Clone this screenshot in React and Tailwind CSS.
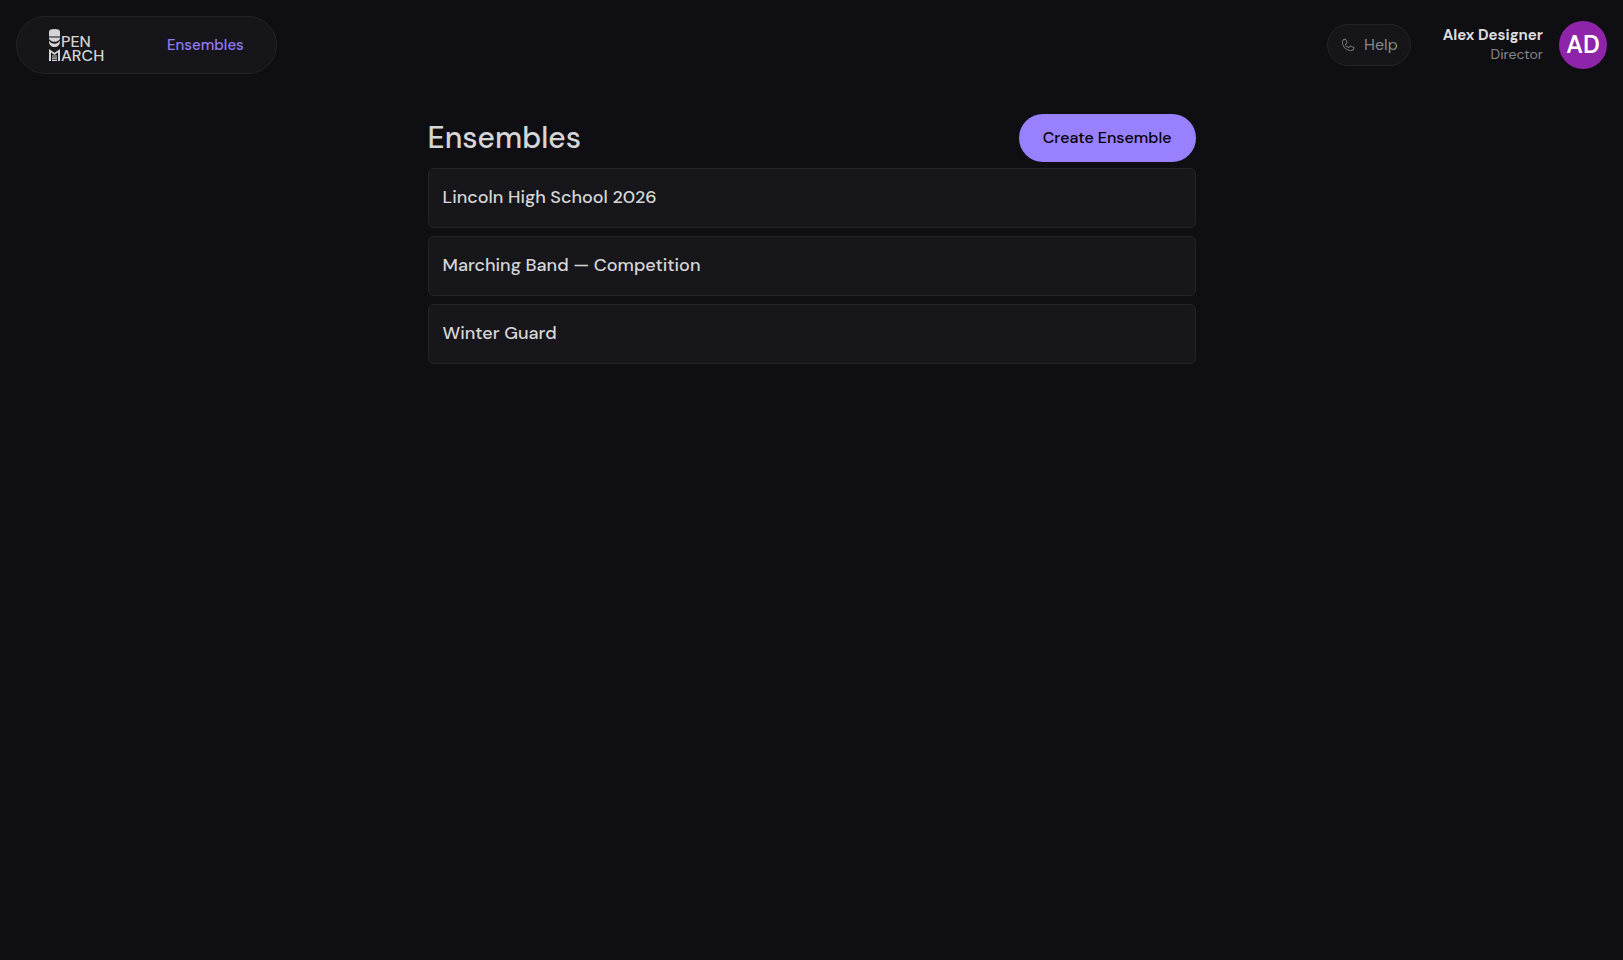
import React from 'react';
import { PiPhoneLight } from 'react-icons/pi';

const ensembles = [
  { id: 1, name: 'Lincoln High School 2026' },
  { id: 2, name: 'Marching Band — Competition' },
  { id: 3, name: 'Winter Guard' },
];

const Logo = () => (
  <svg
    width="54"
    height="34"
    viewBox="0 0 54 34"
    fill="#d4d4d6"
    role="img"
    aria-label="OpenMarch"
    className="overflow-visible"
  >
    {/* Shako, visor and chin strap */}
    <path d="M0 3.6C0 1.8 2.4 1 5.5 1S11 1.8 11 3.6V8.6H0Z" />
    <path d="M0 9.4H11V11C9.4 13 7.6 13.8 5.5 13.8S1.6 13 0 11Z" />
    <path d="M0 12.6C1.4 14.8 3.4 15.8 5.5 15.8S9.6 14.8 11 12.6V13.4C11 16.8 8.6 19 5.5 19S0 16.8 0 13.4Z" />
    {/* Uniform jacket */}
    <path d="M0 21L5.5 24.8L11 21V33H9V24.6L5.5 27L2 24.6V33H0Z" />
    <path d="M3 27.4H8V28.5H3ZM3 29.6H8V30.7H3ZM3 31.8H8V32.9H3Z" />
    <text x="12" y="19" fontSize="16" fontWeight="500">PEN</text>
    <text x="12" y="33" fontSize="16" fontWeight="500">ARCH</text>
  </svg>
);

const Header = () => (
  <header className="flex items-center justify-between px-4 pt-4">
    <nav className="flex h-[58px] items-center gap-16 rounded-full border border-[#242428] bg-[#16161a] px-8">
      <a href="#home">
        <Logo />
      </a>
      <a href="#ensembles" className="text-[15px] font-medium text-[#9479f0]">
        Ensembles
      </a>
    </nav>

    <div className="flex items-center gap-8">
      <button
        type="button"
        className="flex h-[42px] items-center gap-2 rounded-full border border-[#242428] bg-[#16161a] px-3 text-[#88888c]"
      >
        <PiPhoneLight className="size-4" />
        Help
      </button>
      <div className="flex items-center gap-4">
        <div className="text-right">
          <p className="text-[15px] leading-[19px] font-bold text-[#dcdcde]">Alex Designer</p>
          <p className="text-sm leading-[19px] text-[#88888c]">Director</p>
        </div>
        <div className="flex size-12 items-center justify-center rounded-full bg-[#8e24aa] text-2xl font-semibold text-white">
          AD
        </div>
      </div>
    </div>
  </header>
);

export default function App() {
  return (
    <div className="min-h-screen bg-[#0f0e13] font-['DM_Sans',Inter,sans-serif] text-[#d6d6d8]">
      <Header />
      <main className="mx-auto max-w-3xl pt-10">
        <div className="flex items-center justify-between">
          <h1 className="text-3xl font-medium">Ensembles</h1>
          <button
            type="button"
            className="h-12 rounded-full bg-[#9880ff] px-6 font-medium text-black"
          >
            Create Ensemble
          </button>
        </div>
        <ul className="mt-1.5 flex flex-col gap-2">
          {ensembles.map((ensemble) => (
            <li key={ensemble.id}>
              <a
                href={`#ensemble-${ensemble.id}`}
                className="block min-h-15 rounded-md border border-[#242428] bg-[#17161b] p-3.5 text-lg leading-7 font-medium"
              >
                {ensemble.name}
              </a>
            </li>
          ))}
        </ul>
      </main>
    </div>
  );
}
